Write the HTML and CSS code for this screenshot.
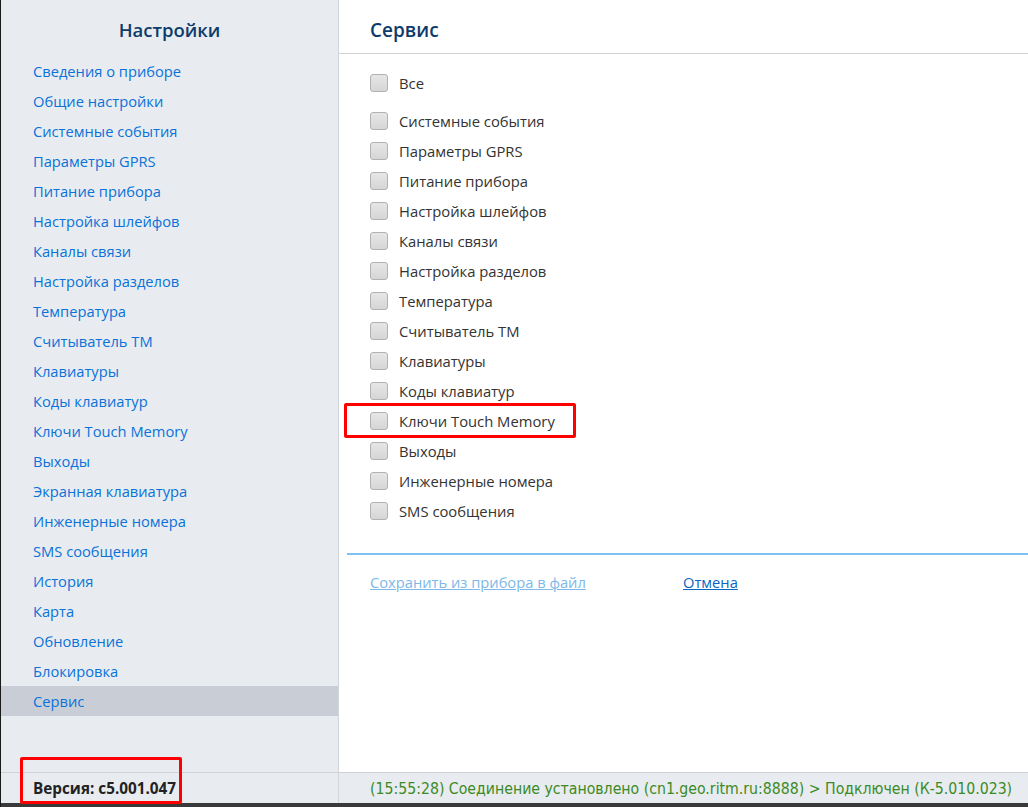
FILE: index.html
```html
<!DOCTYPE html>
<html lang="ru">
<head>
<meta charset="utf-8">
<link rel="stylesheet" href="styles.css">
</head>
<body>
<div class="app">
  <div class="top">
    <aside class="sidebar">
      <h1 class="side-title">Настройки</h1>
      <nav class="menu">
        <a class="item">Сведения о приборе</a>
        <a class="item">Общие настройки</a>
        <a class="item">Системные события</a>
        <a class="item">Параметры GPRS</a>
        <a class="item">Питание прибора</a>
        <a class="item">Настройка шлейфов</a>
        <a class="item">Каналы связи</a>
        <a class="item">Настройка разделов</a>
        <a class="item">Температура</a>
        <a class="item">Считыватель ТМ</a>
        <a class="item">Клавиатуры</a>
        <a class="item">Коды клавиатур</a>
        <a class="item">Ключи Touch Memory</a>
        <a class="item">Выходы</a>
        <a class="item">Экранная клавиатура</a>
        <a class="item">Инженерные номера</a>
        <a class="item">SMS сообщения</a>
        <a class="item">История</a>
        <a class="item">Карта</a>
        <a class="item">Обновление</a>
        <a class="item">Блокировка</a>
        <a class="item active">Сервис</a>
      </nav>
    </aside>
    <main class="content">
      <header class="head"><h2 class="title">Сервис</h2></header>
      <div class="checks">
        <label class="row all"><span class="box"></span>Все</label>
        <label class="row first"><span class="box"></span>Системные события</label>
        <label class="row"><span class="box"></span>Параметры GPRS</label>
        <label class="row"><span class="box"></span>Питание прибора</label>
        <label class="row"><span class="box"></span>Настройка шлейфов</label>
        <label class="row"><span class="box"></span>Каналы связи</label>
        <label class="row"><span class="box"></span>Настройка разделов</label>
        <label class="row"><span class="box"></span>Температура</label>
        <label class="row"><span class="box"></span>Считыватель ТМ</label>
        <label class="row"><span class="box"></span>Клавиатуры</label>
        <label class="row"><span class="box"></span>Коды клавиатур</label>
        <label class="row marked"><span class="box"></span>Ключи Touch Memory</label>
        <label class="row"><span class="box"></span>Выходы</label>
        <label class="row"><span class="box"></span>Инженерные номера</label>
        <label class="row"><span class="box"></span>SMS сообщения</label>
      </div>
      <div class="actions">
        <a class="link disabled">Сохранить из прибора в файл</a>
        <a class="link cancel">Отмена</a>
      </div>
    </main>
  </div>
  <footer class="status">
    <div class="version"><span class="version-text">Версия: с5.001.047</span></div>
    <div class="conn">(15:55:28) Соединение установлено (cn1.geo.ritm.ru:8888) &gt; Подключен (К-5.010.023)</div>
  </footer>
  <div class="edge"></div>
</div>
</body>
</html>
```
FILE: styles.css
```css
html, body {
  margin: 0;
  padding: 0;
  background: #ffffff;
}
body {
  font-family: "Open Sans", "Noto Sans", sans-serif;
  width: 1028px;
  height: 807px;
  overflow: hidden;
}
.app {
  display: flex;
  flex-direction: column;
  height: 807px;
  border-left: 1px solid #1a1a1a;
  box-sizing: border-box;
}
.top {
  display: flex;
  height: 772px;
}
.sidebar {
  width: 337px;
  background: #e8ecf0;
  border-right: 1px solid #d2d6db;
  display: flex;
  flex-direction: column;
}
.side-title {
  margin: 0;
  height: 56px;
  line-height: 60px;
  text-align: center;
  font-size: 18.5px;
  font-weight: 600;
  color: #0d3b6b;
}
.menu {
  display: flex;
  flex-direction: column;
}
.item {
  display: block;
  height: 30px;
  line-height: 30px;
  padding-left: 32px;
  font-size: 14.7px;
  color: #0a72d9;
  cursor: pointer;
}
.item.active {
  background: #c9ced6;
}
.content {
  flex: 1;
  display: flex;
  flex-direction: column;
}
.head {
  height: 54px;
  border-bottom: 1px solid #d3d3d3;
  box-sizing: border-box;
  padding-left: 31px;
}
.title {
  margin: 0;
  line-height: 60px;
  font-size: 19px;
  font-weight: 600;
  color: #0d3b6b;
}
.checks {
  display: flex;
  flex-direction: column;
  padding-top: 14px;
  padding-left: 31px;
}
.row {
  position: relative;
  display: flex;
  align-items: center;
  height: 30px;
  font-size: 14.8px;
  color: #333333;
}
.row.all {
  margin-bottom: 8px;
}
.box {
  width: 16px;
  height: 16px;
  border: 1px solid #b2b2b2;
  border-radius: 3px;
  background: linear-gradient(#e6e6e6, #d6d6d6);
  margin-right: 11px;
  box-sizing: content-box;
}
.row.marked::after {
  content: "";
  position: absolute;
  left: -26px;
  top: -3px;
  width: 226px;
  height: 29px;
  border: 3px solid #ff0000;
  border-radius: 2px;
}
.actions {
  margin-top: 27px;
  margin-left: 8px;
  border-top: 2px solid #7cc1f2;
  padding-left: 23px;
  padding-top: 17px;
  display: flex;
  font-size: 14.7px;
}
.link {
  text-decoration: underline;
  cursor: pointer;
}
.link.disabled {
  color: #7db8e8;
  width: 313px;
}
.link.cancel {
  color: #0a66c2;
}
.status {
  display: flex;
  height: 31px;
  background: #e8ecf0;
  border-top: 1px solid #cfd3d8;
  box-sizing: border-box;
}
.version {
  position: relative;
  width: 338px;
  box-sizing: border-box;
  border-right: 1px solid #d2d6db;
  padding-left: 32px;
  display: flex;
  align-items: center;
  font-size: 15.3px;
  font-weight: 700;
  color: #222222;
}
.version::after {
  content: "";
  position: absolute;
  left: 19px;
  top: -16px;
  width: 156px;
  height: 41px;
  border: 3px solid #ff0000;
  border-radius: 2px;
}
.conn {
  padding-left: 31px;
  display: flex;
  align-items: center;
  white-space: nowrap;
  font-family: "DejaVu Sans Condensed", "DejaVu Sans", sans-serif;
  font-stretch: condensed;
  font-size: 15.7px;
  color: #3b8a24;
}
.edge {
  height: 4px;
  background: #3a3a3a;
}
```
